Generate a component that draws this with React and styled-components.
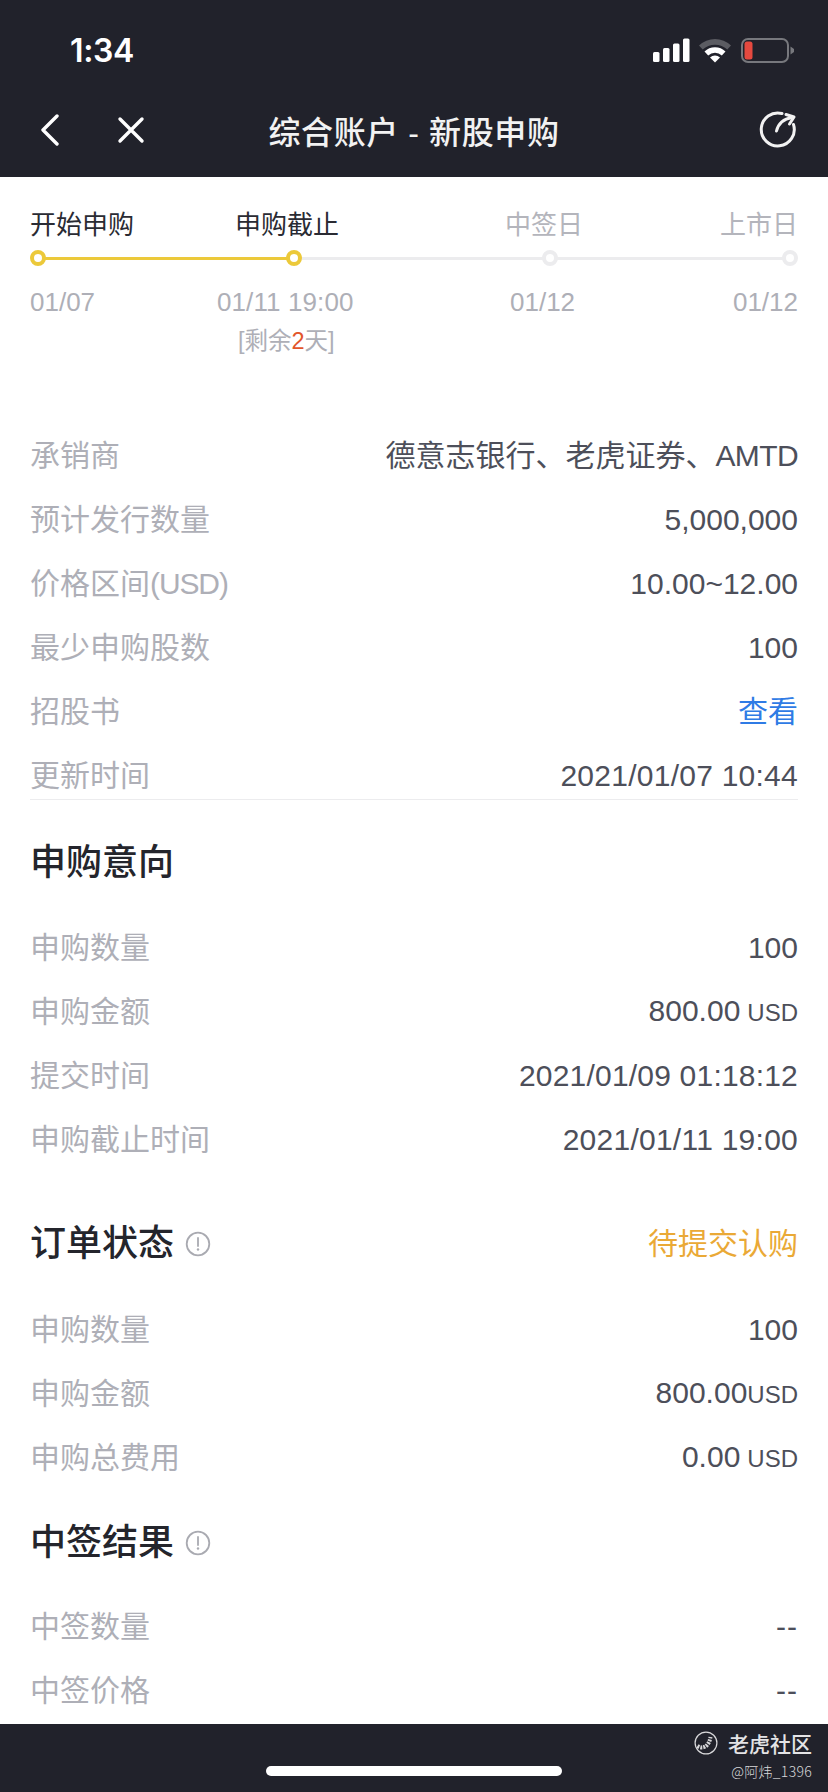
import React from "react";
import styled, { createGlobalStyle } from "styled-components";

const Global = createGlobalStyle`
  html, body { margin: 0; padding: 0; background: #fff; }
  * { box-sizing: border-box; }
`;
const FONT = `"Liberation Sans", "Noto Sans CJK SC", sans-serif`;

const Frame = styled.div`
  position: relative; width: 828px; height: 1792px; overflow: hidden; font-family: ${FONT}; background: #fff;
`;
const Page = styled.div`
  width: 828px; height: 1792px; display: flex; flex-direction: column; overflow: hidden;
`;
const Top = styled.header`
  height: 177px; flex: none; background: #21222b; color: #fff; display: flex; flex-direction: column;
`;
const StatusBar = styled.div`
  height: 88px; flex: none; display: flex; align-items: center; justify-content: space-between;
  padding: 12px 33px 0 70px;
`;
const Clock = styled.span`
  font-family: "Inter", "Liberation Sans", sans-serif; font-size: 32px; font-weight: 600; letter-spacing: -0.4px; line-height: 1; padding-top: 1px;
`;
const NavBar = styled.div`
  flex: 1; position: relative; display: flex; align-items: center; justify-content: space-between; padding: 0 31px 6px 40px;
`;
const NavLeft = styled.div`display: flex; align-items: center; gap: 57px;`;
const NavTitle = styled.div`
  position: absolute; left: 0; right: 0; top: 25px; text-align: center; font-size: 32px; line-height: 40px; font-weight: 500;
  color: #f2f2f2; letter-spacing: 0.6px; white-space: nowrap;
`;
const Icon = styled.svg`display: block; flex: none;`;

const Steps = styled.section`
  flex: none; height: 208px; padding: 31px 30px 0;
`;
const StepLabels = styled.div`
  display: grid; grid-template-columns: 205px 270px 187px 1fr; height: 34px;
`;
const StepLabel = styled.div`
  font-size: 26px; line-height: 34px; color: ${p => (p.$on ? "#2a2b33" : "#b4b5bc")}; white-space: nowrap;
  text-align: ${p => (p.$end ? "right" : "left")};
`;
const Track = styled.div`
  position: relative; height: 16px; margin-top: 8px;
`;
const Line = styled.div`
  position: absolute; top: 6.5px; height: 3px; background: ${p => (p.$on ? "#ecc93a" : "#ececee")};
`;
const Dot = styled.div`
  position: absolute; top: 0; width: 16px; height: 16px; border-radius: 50%; background: #fff;
  border: 4px solid ${p => (p.$on ? "#ecc93a" : "#ececee")};
`;
const StepDates = styled.div`
  display: grid; grid-template-columns: 186px 273px 187px 1fr; margin-top: 19px;
`;
const StepDate = styled.div`
  font-size: 26px; line-height: 34px; color: #aeafb7; white-space: nowrap; text-align: ${p => (p.$end ? "right" : "left")};
  padding-left: ${p => p.$pad || 0}px; letter-spacing: ${p => p.$ls || 0}px;
`;
const Remain = styled.div`
  font-size: 23.5px; line-height: 30px; color: #aeafb7; margin-top: 7px; margin-left: 208px; white-space: nowrap;
`;
const Hot = styled.span`color: #e2562b;`;

const Section = styled.section`
  flex: none; padding: 0 30px;
`;
const Info = styled(Section)`margin-top: 39px;`;
const Row = styled.div`
  height: 64px; display: flex; align-items: center; justify-content: space-between;
`;
const Key = styled.span`font-size: 30px; line-height: 40px; color: #aeafb7; white-space: nowrap;`;
const Tight = styled.span`letter-spacing: ${p => p.$ls}px;`;
const Val = styled.span`
  font-size: 30px; line-height: 40px; color: ${p => p.$c || "#4d4f5a"}; white-space: nowrap; letter-spacing: ${p => p.$ls || 0}px;
`;
const Unit = styled.span`font-size: 24px; letter-spacing: 0; margin-left: ${p => p.$gap ?? 7}px;`;
const Rule = styled.div`height: 1px; background: #ececee; margin: -9px 0 8px;`;
const HeadRow = styled.div`
  height: ${p => p.$h}px; margin-top: ${p => p.$mt || 0}px; padding-top: ${p => p.$pt || 0}px;
  display: flex; align-items: center; justify-content: space-between;
`;
const HeadLeft = styled.div`display: flex; align-items: center; gap: 11px;`;
const Heading = styled.h2`
  margin: 0; font-size: 36px; font-weight: 500; color: #24252c; line-height: 1; white-space: nowrap;
`;

const Bottom = styled.footer`
  position: absolute; left: 0; right: 0; top: 1724px; height: 68px; background: #21222b;
`;
const HomeBar = styled.div`
  position: absolute; left: 266px; top: 1766px; width: 296px; height: 10px; border-radius: 5px; background: #fff;
`;
const Mark = styled.div`
  position: absolute; right: 16px; top: 1729px; display: flex; flex-direction: column; align-items: flex-end;
  font-family: "Noto Sans CJK SC", sans-serif;
`;
const MarkTop = styled.div`display: flex; align-items: center; gap: 10px; color: #e4e4e6; font-size: 21px; line-height: 28px; font-weight: 500;`;
const MarkSub = styled.div`color: #d8d8da; font-size: 14px; line-height: 20px; margin-top: 4px; font-weight: 300; letter-spacing: 0.3px;`;

const Info2 = () => (
  <Icon width="26" height="26" viewBox="0 0 26 26">
    <circle cx="13" cy="13" r="11.3" fill="none" stroke="#a9aab1" strokeWidth="1.8" />
    <path d="M13 7v8" stroke="#a9aab1" strokeWidth="1.8" strokeLinecap="round" />
    <circle cx="13" cy="18.5" r="1.2" fill="#a9aab1" />
  </Icon>
);

const KV = ({ k, v, c, unit, gap, ls }) => (
  <Row>
    <Key>{k}</Key>
    <Val $c={c} $ls={ls}>{v}{unit && <Unit $gap={gap}>{unit}</Unit>}</Val>
  </Row>
);

export default function App() {
  return (
    <Frame>
      <Global />
      <Page>
        <Top>
          <StatusBar>
            <Clock>1:34</Clock>
            <Icon width="142" height="25" viewBox="0 0 142 25">
              <rect x="0" y="14" width="6.5" height="10" rx="1.5" fill="#fff" />
              <rect x="10" y="10" width="6.5" height="14" rx="1.5" fill="#fff" />
              <rect x="20" y="5.5" width="6.5" height="18.5" rx="1.5" fill="#fff" />
              <rect x="30" y="0.5" width="6.5" height="23.5" rx="1.5" fill="#fff" />
              <path d="M46 7.5 a 23 23 0 0 1 32 0 l-3.7 4 a 18 18 0 0 0 -24.6 0z" fill="#5b5c62" />
              <path d="M51.5 13.5 a 15 15 0 0 1 21 0 l-3.7 4 a 10 10 0 0 0 -13.6 0z" fill="#fff" />
              <path d="M57 19.5 a 7.5 7.5 0 0 1 10 0 L62 24.5z" fill="#fff" />
              <rect x="89" y="1" width="46" height="23" rx="6" fill="none" stroke="#77787d" strokeWidth="2" />
              <rect x="91.5" y="3.5" width="8" height="18" rx="2.5" fill="#e5493f" />
              <path d="M137.5 8.5 L141 11 V14 L137.5 16.5z" fill="#77787d" />
            </Icon>
          </StatusBar>
          <NavBar>
            <NavLeft>
              <Icon width="20" height="32" viewBox="0 0 20 32">
                <path d="M17 2 L3 16 L17 30" fill="none" stroke="#fff" strokeWidth="3.4" strokeLinecap="round" strokeLinejoin="round" />
              </Icon>
              <Icon width="28" height="28" viewBox="0 0 28 28">
                <path d="M3 3 L25 25 M25 3 L3 25" stroke="#fff" strokeWidth="3.4" strokeLinecap="round" />
              </Icon>
            </NavLeft>
            <NavTitle>综合账户 - 新股申购</NavTitle>
            <Icon width="38" height="38" viewBox="0 0 38 38">
              <path d="M23 2.5 A 16.5 16.5 0 1 0 34.5 13.5" fill="none" stroke="#f2f2f2" strokeWidth="3" strokeLinecap="round" />
              <path d="M17.5 20 C 19 14 23 8 33 6.5" fill="none" stroke="#f2f2f2" strokeWidth="3" strokeLinecap="round" />
              <path d="M27 3.5 L35 6 L30.5 13" fill="none" stroke="#f2f2f2" strokeWidth="3" strokeLinecap="round" strokeLinejoin="round" />
            </Icon>
          </NavBar>
        </Top>

        <Steps>
          <StepLabels>
            <StepLabel $on>开始申购</StepLabel>
            <StepLabel $on>申购截止</StepLabel>
            <StepLabel>中签日</StepLabel>
            <StepLabel $end>上市日</StepLabel>
          </StepLabels>
          <Track>
            <Line $on style={{ left: 8, width: 256 }} />
            <Line style={{ left: 264, right: 8 }} />
            <Dot $on style={{ left: 0 }} />
            <Dot $on style={{ left: 256 }} />
            <Dot style={{ left: 512 }} />
            <Dot style={{ left: 752 }} />
          </Track>
          <StepDates>
            <StepDate>01/07</StepDate>
            <StepDate $pad={1} $ls={0.1}>01/11 19:00</StepDate>
            <StepDate $pad={21}>01/12</StepDate>
            <StepDate $end>01/12</StepDate>
          </StepDates>
          <Remain>[剩余<Hot>2</Hot>天]</Remain>
        </Steps>

        <Info>
          <KV k="承销商" v={<>德意志银行、老虎证券、<Tight $ls={-0.6}>AMTD</Tight></>} />
          <KV k="预计发行数量" v="5,000,000" />
          <KV k={<>价格区间<Tight $ls={-1.1}>(USD)</Tight></>} v="10.00~12.00" />
          <KV k="最少申购股数" v="100" />
          <KV k="招股书" v="查看" c="#2f7be5" />
          <KV k="更新时间" v="2021/01/07 10:44" ls={0.25} />
          <Rule />
        </Info>

        <Section>
          <HeadRow $h={108} $pt={2}><Heading>申购意向</Heading></HeadRow>
          <KV k="申购数量" v="100" />
          <KV k="申购金额" v="800.00" unit="USD" />
          <KV k="提交时间" v="2021/01/09 01:18:12" ls={0.2} />
          <KV k="申购截止时间" v="2021/01/11 19:00" ls={0.25} />
        </Section>

        <Section>
          <HeadRow $h={108} $mt={18}>
            <HeadLeft><Heading>订单状态</Heading><Info2 /></HeadLeft>
            <Val $c="#eaa936">待提交认购</Val>
          </HeadRow>
          <KV k="申购数量" v="100" />
          <KV k="申购金额" v="800.00" unit="USD" gap={0} />
          <KV k="申购总费用" v="0.00" unit="USD" />
        </Section>

        <Section>
          <HeadRow $h={105}>
            <HeadLeft><Heading>中签结果</Heading><Info2 /></HeadLeft>
          </HeadRow>
          <KV k="中签数量" v="--" ls={1} />
          <KV k="中签价格" v="--" ls={1} />
        </Section>
      </Page>
      <Bottom />
      <HomeBar />
      <Mark>
        <MarkTop>
          <Icon width="24" height="24" viewBox="0 0 24 24">
            <circle cx="12" cy="12" r="10.9" fill="none" stroke="#d8d8da" strokeWidth="1.2" />
            <path d="M3.5 15 C9 18.5 15 15.5 16.5 6" fill="none" stroke="#d8d8da" strokeWidth="4" strokeDasharray="2 1" />
          </Icon>
          老虎社区
        </MarkTop>
        <MarkSub>@阿炜_1396</MarkSub>
      </Mark>
    </Frame>
  );
}
